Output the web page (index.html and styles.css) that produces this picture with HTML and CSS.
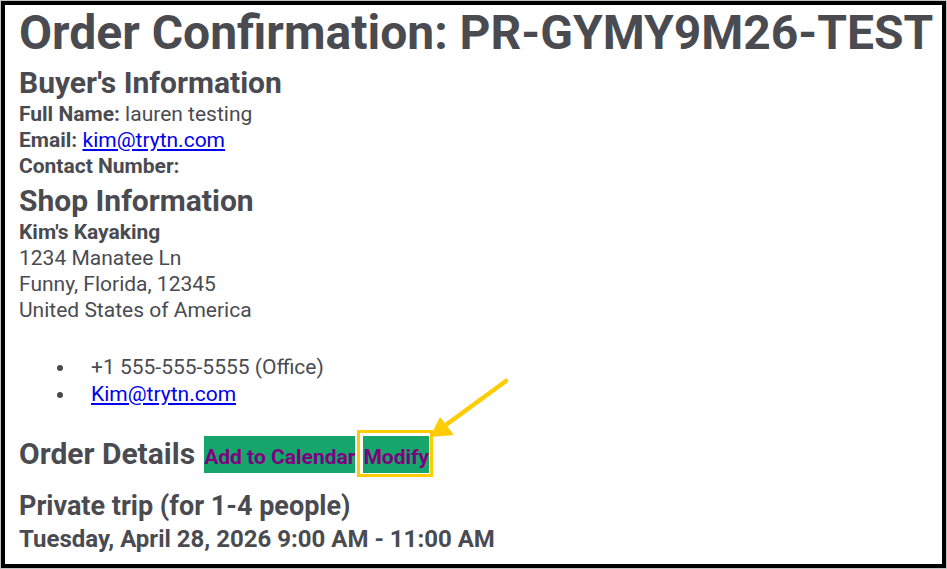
FILE: index.html
```html
<!DOCTYPE html>
<html lang="en">
<head>
<meta charset="utf-8">
<title>Order Confirmation</title>
<link rel="stylesheet" href="styles.css">
</head>
<body>
<div class="frame">
  <h1 class="title">Order Confirmation: PR-GYMY9M26-TEST</h1>
  <h2 class="section section-buyer">Buyer's Information</h2>
  <div class="line"><b>Full Name:</b> lauren testing</div>
  <div class="line"><b>Email:</b> <a href="#" class="link">kim@trytn.com</a></div>
  <div class="line"><b>Contact Number:</b></div>
  <h2 class="section section-shop">Shop Information</h2>
  <div class="line"><b>Kim's Kayaking</b></div>
  <div class="line">1234 Manatee Ln</div>
  <div class="line">Funny, Florida, 12345</div>
  <div class="line">United States of America</div>
  <ul class="contacts">
    <li>+1 555-555-5555 (Office)</li>
    <li><a href="#" class="link">Kim@trytn.com</a></li>
  </ul>
  <div class="details-row">
    <h2 class="section section-details">Order Details</h2>
    <a href="#" class="btn">Add to Calendar</a>
    <span class="highlight"><a href="#" class="btn">Modify</a></span>
  </div>
  <div class="trip">Private trip (for 1-4 people)</div>
  <div class="when">Tuesday, April 28, 2026 9:00 AM - 11:00 AM</div>

  <svg class="arrow" width="947" height="569" viewBox="0 0 947 569" aria-hidden="true">
    <line x1="506" y1="381" x2="443" y2="427" stroke="#ffcc00" stroke-width="4.5" stroke-linecap="round"/>
    <polygon points="430,437 440,417 454,435" fill="#ffcc00"/>
  </svg>
</div>
</body>
</html>
```

FILE: styles.css
```css
html, body {
  margin: 0;
  padding: 0;
  background: #ffffff;
}

body {
  font-family: Roboto, "Liberation Sans", Arial, sans-serif;
  color: #4a4b51;
  font-size: 21px;
  line-height: 26px;
  width: 947px;
  height: 569px;
  overflow: hidden;
}

.frame {
  position: relative;
  margin: 1px;
  height: 567px;
  box-sizing: border-box;
  border: 4px solid #000000;
  box-shadow: 0 0 0 1px #c4c4c4;
  padding: 0 0 0 14px;
  overflow: hidden;
}

.title {
  margin: 0;
  font-size: 48px;
  line-height: 56px;
  font-weight: 700;
  white-space: nowrap;
}

.section {
  margin: 0;
  font-size: 30px;
  line-height: 36px;
  font-weight: 700;
}

.section-buyer {
  margin-top: 4px;
}

.section-shop {
  margin-top: 4px;
}

.line b {
  font-weight: 700;
}

.link {
  color: #0000ee;
  text-decoration: underline;
}

.contacts {
  margin: 31px 0 0;
  padding-left: 57px;
}

.contacts li {
  padding-left: 15px;
  line-height: 27px;
}

.details-row {
  margin-top: 28px;
  display: flex;
  align-items: baseline;
}

.section-details {
  margin-right: 9px;
}

.btn {
  display: inline-block;
  background: #16a66c;
  color: #800080;
  font-size: 21px;
  font-weight: 700;
  line-height: 24px;
  padding: 9px 0 4px;
  text-decoration: none;
}

.highlight {
  position: relative;
  margin-left: 8px;
}

.highlight::after {
  content: "";
  position: absolute;
  left: -6px;
  top: -6px;
  right: -4px;
  bottom: -4px;
  border: 3px solid #ffcc00;
  box-sizing: border-box;
}

.trip {
  margin-top: 17px;
  font-size: 27px;
  line-height: 32px;
  font-weight: 700;
}

.when {
  margin-top: 2px;
  font-size: 24px;
  line-height: 30px;
  font-weight: 700;
}

.arrow {
  position: absolute;
  left: -5px;
  top: -5px;
  pointer-events: none;
}
```
